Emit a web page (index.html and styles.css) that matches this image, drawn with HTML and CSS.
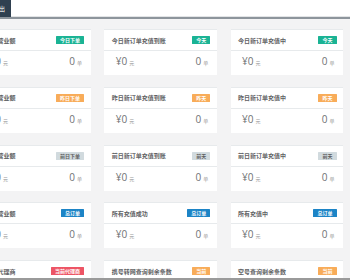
FILE: index.html
```html
<!DOCTYPE html>
<html lang="zh">
<head>
<meta charset="utf-8">
<link rel="stylesheet" href="styles.css">
</head>
<body>
<div class="topbar"><span class="exit">出</span></div>
<div class="main">
  <div class="grid">
    <div class="card"><div class="head"><span class="title">今日营业额</span><span class="badge green">今日下单</span></div><div class="body"><span class="money">¥0<small>元</small></span><span class="count">0<small>单</small></span></div></div>
    <div class="card"><div class="head"><span class="title">今日新订单充值到账</span><span class="badge green">今天</span></div><div class="body"><span class="money">¥0<small>元</small></span><span class="count">0<small>单</small></span></div></div>
    <div class="card"><div class="head"><span class="title">今日新订单充值中</span><span class="badge green">今天</span></div><div class="body"><span class="money">¥0<small>元</small></span><span class="count">0<small>单</small></span></div></div>

    <div class="card"><div class="head"><span class="title">昨日营业额</span><span class="badge orange">昨日下单</span></div><div class="body"><span class="money">¥0<small>元</small></span><span class="count">0<small>单</small></span></div></div>
    <div class="card"><div class="head"><span class="title">昨日新订单充值到账</span><span class="badge orange">昨天</span></div><div class="body"><span class="money">¥0<small>元</small></span><span class="count">0<small>单</small></span></div></div>
    <div class="card"><div class="head"><span class="title">昨日新订单充值中</span><span class="badge orange">昨天</span></div><div class="body"><span class="money">¥0<small>元</small></span><span class="count">0<small>单</small></span></div></div>

    <div class="card"><div class="head"><span class="title">前日营业额</span><span class="badge gray">前日下单</span></div><div class="body"><span class="money">¥0<small>元</small></span><span class="count">0<small>单</small></span></div></div>
    <div class="card"><div class="head"><span class="title">前日新订单充值到账</span><span class="badge gray">前天</span></div><div class="body"><span class="money">¥0<small>元</small></span><span class="count">0<small>单</small></span></div></div>
    <div class="card"><div class="head"><span class="title">前日新订单充值中</span><span class="badge gray">前天</span></div><div class="body"><span class="money">¥0<small>元</small></span><span class="count">0<small>单</small></span></div></div>

    <div class="card"><div class="head"><span class="title">所有营业额</span><span class="badge blue">总订单</span></div><div class="body"><span class="money">¥0<small>元</small></span><span class="count">0<small>单</small></span></div></div>
    <div class="card"><div class="head"><span class="title">所有充值成功</span><span class="badge blue">总订单</span></div><div class="body"><span class="money">¥0<small>元</small></span><span class="count">0<small>单</small></span></div></div>
    <div class="card"><div class="head"><span class="title">所有充值中</span><span class="badge blue">总订单</span></div><div class="body"><span class="money">¥0<small>元</small></span><span class="count">0<small>单</small></span></div></div>

    <div class="card"><div class="head"><span class="title">下级代理商</span><span class="badge red">当前代理商</span></div><div class="body"><span class="money">0<small>个</small></span></div></div>
    <div class="card"><div class="head"><span class="title">携号转网查询剩余条数</span><span class="badge orange">当前</span></div><div class="body"><span class="money">0<small>条</small></span></div></div>
    <div class="card"><div class="head"><span class="title">空号查询剩余条数</span><span class="badge orange">当前</span></div><div class="body"><span class="money">0<small>条</small></span></div></div>
  </div>
</div>
<div class="footer"></div>
</body>
</html>
```
FILE: styles.css
```css
html, body {
  margin: 0;
  padding: 0;
}
body {
  width: 350px;
  height: 280px;
  overflow: hidden;
  display: flex;
  flex-direction: column;
  background: #f3f3f4;
  font-family: "Noto Sans CJK SC", "Open Sans", sans-serif;
  color: #676a6c;
}
.topbar {
  flex: 0 0 auto;
  height: 17px;
  background: #ffffff;
  border-bottom: 2px solid #8d959c;
  box-shadow: inset 0 -1px 0 #e2e4e6;
  display: flex;
  align-items: stretch;
}
.exit {
  width: 11px;
  background: #2f4050;
  color: #ffffff;
  font-size: 6px;
  display: flex;
  align-items: center;
  justify-content: flex-end;
  padding-right: 6px;
  margin-left: -6px;
  overflow: hidden;
}
.main {
  flex: 1 1 auto;
  overflow: hidden;
  padding-top: 10px;
}
.grid {
  margin-left: -22px;
  display: grid;
  grid-template-columns: repeat(3, 112.5px);
  column-gap: 13.75px;
  row-gap: 11.75px;
}
.card {
  background: #ffffff;
  border-top: 1px solid #e7eaec;
  height: 45px;
  display: flex;
  flex-direction: column;
}
.head {
  height: 20px;
  border-bottom: 1px solid #e7eaec;
  display: flex;
  align-items: center;
  justify-content: space-between;
  padding: 0 6.5px 0 7.5px;
}
.title {
  font-size: 6px;
  font-weight: 600;
  color: #5f6264;
  white-space: nowrap;
}
.badge {
  font-size: 5px;
  line-height: 8px;
  height: 8px;
  padding: 0 4px;
  color: #ffffff;
  font-weight: 600;
  white-space: nowrap;
  border-radius: 0.5px;
}
.green { background: #1ab394; }
.orange { background: #f8ac59; }
.gray { background: #d1dade; color: #5e5e5e; }
.blue { background: #1c84c6; }
.red { background: #ed5565; }
.body {
  flex: 1 1 auto;
  display: flex;
  align-items: center;
  justify-content: space-between;
  padding: 0 8.5px 2px 11.5px;
}
.money, .count {
  font-family: "Open Sans", "Noto Sans CJK SC", sans-serif;
  font-size: 10px;
  font-weight: 400;
  color: #6f7274;
  line-height: 12px;
}
.money small, .count small {
  font-family: "Noto Sans CJK SC", sans-serif;
  font-size: 5px;
  color: #999999;
  margin-left: 2px;
}
.footer {
  flex: 0 0 2px;
  background: #9a9a9a;
}
```
